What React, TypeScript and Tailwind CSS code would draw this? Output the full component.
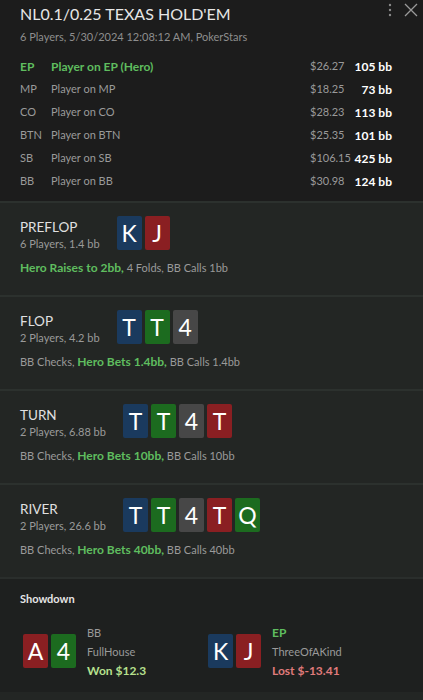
const font = { fontFamily: 'Lato, "Noto Sans", sans-serif' };

type CardColor = 'blue' | 'red' | 'green' | 'gray';

const cardBg: Record<CardColor, string> = {
  blue: 'bg-[#1a3a5e]',
  red: 'bg-[#8a1f22]',
  green: 'bg-[#1c6b1f]',
  gray: 'bg-[#474747]',
};

function Card({ v, c }: { v: string; c: CardColor }) {
  return (
    <div
      className={`flex h-[34px] w-[25px] items-center justify-center rounded-[2px] text-[23px] leading-none text-white ${cardBg[c]}`}
    >
      {v}
    </div>
  );
}

const players = [
  { pos: 'EP', name: 'Player on EP (Hero)', amt: '$26.27', bb: '105 bb', hero: true },
  { pos: 'MP', name: 'Player on MP', amt: '$18.25', bb: '73 bb' },
  { pos: 'CO', name: 'Player on CO', amt: '$28.23', bb: '113 bb' },
  { pos: 'BTN', name: 'Player on BTN', amt: '$25.35', bb: '101 bb' },
  { pos: 'SB', name: 'Player on SB', amt: '$106.15', bb: '425 bb' },
  { pos: 'BB', name: 'Player on BB', amt: '$30.98', bb: '124 bb' },
];

type Street = {
  name: string;
  info: string;
  cards: [string, CardColor][];
  pre?: string;
  hero: string;
  post: string;
};

const streets: Street[] = [
  {
    name: 'PREFLOP',
    info: '6 Players, 1.4 bb',
    cards: [['K', 'blue'], ['J', 'red']],
    hero: 'Hero Raises to 2bb,',
    post: ' 4 Folds, BB Calls 1bb',
  },
  {
    name: 'FLOP',
    info: '2 Players, 4.2 bb',
    cards: [['T', 'blue'], ['T', 'green'], ['4', 'gray']],
    pre: 'BB Checks, ',
    hero: 'Hero Bets 1.4bb,',
    post: ' BB Calls 1.4bb',
  },
  {
    name: 'TURN',
    info: '2 Players, 6.88 bb',
    cards: [['T', 'blue'], ['T', 'green'], ['4', 'gray'], ['T', 'red']],
    pre: 'BB Checks, ',
    hero: 'Hero Bets 10bb,',
    post: ' BB Calls 10bb',
  },
  {
    name: 'RIVER',
    info: '2 Players, 26.6 bb',
    cards: [['T', 'blue'], ['T', 'green'], ['4', 'gray'], ['T', 'red'], ['Q', 'green']],
    pre: 'BB Checks, ',
    hero: 'Hero Bets 40bb,',
    post: ' BB Calls 40bb',
  },
];

export default function App() {
  return (
    <div className="h-[700px] w-[423px] overflow-hidden bg-[#1c1c1c] text-[#9a9a9a]" style={font}>
      {/* Header */}
      <div className="relative pl-5 pr-[31px] pt-[2px] pb-[8px]">
        <div className="flex absolute right-[5px] top-[3px] items-center gap-3">
          <svg width="4" height="14" viewBox="0 0 4 14" fill="#8a8a8a">
            <circle cx="2" cy="2" r="1.2" />
            <circle cx="2" cy="7" r="1.2" />
            <circle cx="2" cy="12" r="1.2" />
          </svg>
          <svg width="14" height="14" viewBox="0 0 14 14" stroke="#9a9a9a" strokeWidth="1.3">
            <path d="M1 1 L13 13 M13 1 L1 13" />
          </svg>
        </div>
        <div className="text-[16px] leading-[24px] text-[#e6e6e6]">NL0.1/0.25 TEXAS HOLD'EM</div>
        <div className="mt-[1px] text-[11px] leading-[20px] text-[#8e8e8e]">
          6 Players, 5/30/2024 12:08:12 AM, PokerStars
        </div>
        <div className="mt-[8px] flex flex-col">
          {players.map((p) => (
            <div key={p.pos} className="flex h-[23px] items-center whitespace-nowrap text-[11px]">
              <span className={`w-[31px] ${p.hero ? 'text-[12px] font-bold text-[#5fbd5f]' : ''}`}>{p.pos}</span>
              <span className={`flex-1 ${p.hero ? 'text-[12px] font-bold text-[#5fbd5f]' : ''}`}>{p.name}</span>
              <span className="w-[40px] text-left">{p.amt}</span>
              <span className="w-[42px] text-right text-[12px] font-bold text-white">{p.bb}</span>
            </div>
          ))}
        </div>
      </div>

      {/* Streets */}
      {streets.map((s) => (
        <div key={s.name} className="h-[94px] border-t-2 border-[#2c312e] bg-[#232624] px-5 pt-[13px]">
          <div className="flex items-start gap-[17px]">
            <div className="mt-[2px]">
              <div className="text-[13.5px] leading-[18px] text-[#e0e0e0]">{s.name}</div>
              <div className="text-[11px] leading-[16px]">{s.info}</div>
            </div>
            <div className="flex gap-[3px]">
              {s.cards.map(([v, c], i) => (
                <Card key={i} v={v} c={c} />
              ))}
            </div>
          </div>
          <div className="mt-[7px] text-[11px]">
            {s.pre}
            <span className="text-[12px] font-bold text-[#5fbd5f]">{s.hero}</span>
            {s.post}
          </div>
        </div>
      ))}

      {/* Showdown */}
      <div className="h-[115px] border-t-2 border-[#2a2e2c] bg-[#1e201f] px-5 pt-[12px]">
        <div className="text-[11px] font-bold text-[#e6e6e6]">Showdown</div>
        <div className="mt-[15px] flex">
          <div className="flex w-[188px] items-center pl-[3px]">
            <div className="flex gap-[3px]">
              <Card v="A" c="red" />
              <Card v="4" c="green" />
            </div>
            <div className="ml-[11px] flex flex-col text-[11px] leading-[19px]">
              <span>BB</span>
              <span>FullHouse</span>
              <span className="text-[12px] font-bold text-[#b7e08e]">Won $12.3</span>
            </div>
          </div>
          <div className="flex items-center">
            <div className="flex gap-[3px]">
              <Card v="K" c="blue" />
              <Card v="J" c="red" />
            </div>
            <div className="ml-[11px] flex flex-col text-[11px] leading-[19px]">
              <span className="text-[12px] font-bold text-[#5fbd5f]">EP</span>
              <span>ThreeOfAKind</span>
              <span className="text-[12px] font-bold text-[#e07b7b]">Lost $-13.41</span>
            </div>
          </div>
        </div>
      </div>
      <div className="h-[20px] bg-[#232624]" />
    </div>
  );
}
